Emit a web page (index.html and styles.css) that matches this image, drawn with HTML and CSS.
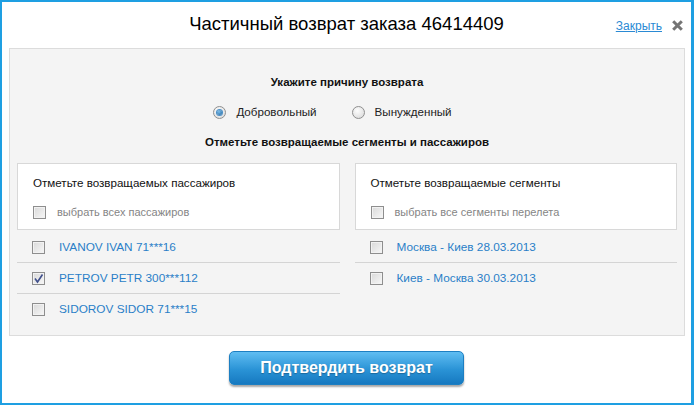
FILE: index.html
```html
<!DOCTYPE html>
<html>
  <head>
    <title>Частичный возврат заказа</title>
    <link rel="stylesheet" href="styles.css">
  </head>
  <body>
    <div class="modal">
      <div class="modal-head">
        <h1 class="modal-title">Частичный возврат заказа 46414409</h1>
        <div class="close">
          <a class="close-link" href="#">Закрыть</a>
          <svg class="close-x" width="11" height="11" viewBox="0 0 11 11">
            <path d="M1.2 1.2 L9.8 9.8 M9.8 1.2 L1.2 9.8" stroke="#747474" stroke-width="3" />
          </svg>
        </div>
      </div>

      <div class="panel">
        <h2 class="panel-title">Укажите причину возврата</h2>
        <div class="reasons">
          <label class="radio"><span class="radio-mark on"></span>Добровольный</label>
          <label class="radio"><span class="radio-mark"></span>Вынужденный</label>
        </div>
        <h2 class="panel-title">Отметьте возвращаемые сегменты и пассажиров</h2>

        <div class="columns">
          <div class="column">
            <div class="column-head">
              <div class="column-title">Отметьте возвращаемых пассажиров</div>
              <label class="check-all"><span class="check"></span>выбрать всех пассажиров</label>
            </div>
            <ul class="items">
              <li><span class="check"></span><a href="#">IVANOV IVAN 71***16</a></li>
              <li>
                <span class="check">
                  <svg width="11" height="11" viewBox="0 0 11 11">
                    <path d="M2 5.5 L4.5 9 L9.5 1.5" fill="none" stroke="#40508c" stroke-width="1.6" />
                  </svg>
                </span>
                <a href="#">PETROV PETR 300***112</a>
              </li>
              <li><span class="check"></span><a href="#">SIDOROV SIDOR 71***15</a></li>
            </ul>
          </div>

          <div class="column">
            <div class="column-head">
              <div class="column-title">Отметьте возвращаемые сегменты</div>
              <label class="check-all"><span class="check"></span>выбрать все сегменты перелета</label>
            </div>
            <ul class="items">
              <li><span class="check"></span><a href="#">Москва - Киев 28.03.2013</a></li>
              <li><span class="check"></span><a href="#">Киев - Москва 30.03.2013</a></li>
            </ul>
          </div>
        </div>
      </div>

      <div class="actions">
        <button class="confirm">Подтвердить возврат</button>
      </div>
    </div>
  </body>
</html>
```

FILE: styles.css
```css
body {
  margin: 0;
  padding: 0;
  font-family: "Liberation Sans", Arial, sans-serif;
  background-color: #fff;
}

.modal {
  width: 694px;
  height: 405px;
  box-sizing: border-box;
  border-style: solid;
  border-color: #1e9fe2;
  border-width: 2px 3px 2px 2px;
  background-color: #fff;
}

.modal-head {
  display: grid;
  grid-template-columns: 1fr auto 1fr;
  align-items: center;
  height: 46px;
  padding-bottom: 2px;
  box-sizing: border-box;
}

.modal-title {
  grid-column: 2;
  margin: 0;
  font-size: 18.5px;
  font-weight: normal;
  color: #000;
  line-height: 44px;
}

.close {
  grid-column: 3;
  justify-self: end;
  display: flex;
  align-items: center;
  gap: 10px;
  padding-right: 8px;
  padding-top: 3px;
}

.close-link {
  font-size: 12px;
  color: #2a8ad4;
  text-decoration: underline;
}

.close-x {
  display: block;
}

.panel {
  height: 288px;
  box-sizing: border-box;
  margin: 0 6px 0 7px;
  padding: 25px 7px 0;
  background-color: #f4f4f4;
  border: 1px solid #dcdcdc;
}

.panel-title {
  margin: 0;
  font-size: 11.5px;
  font-weight: bold;
  line-height: 16px;
  text-align: center;
  color: #111;
}

.reasons {
  display: flex;
  justify-content: center;
  gap: 35px;
  margin: 14px 0;
  padding-right: 29px;
}

.radio {
  display: flex;
  align-items: center;
  gap: 10px;
  font-size: 11.6px;
  line-height: 16px;
  color: #222;
}

.radio-mark {
  width: 11px;
  height: 11px;
  border: 1px solid #8f8f8f;
  border-radius: 50%;
  background: radial-gradient(circle at 40% 35%, #fdfdfd, #d6d6d6);
  display: flex;
  align-items: center;
  justify-content: center;
}

.radio-mark.on::after {
  content: "";
  width: 5px;
  height: 5px;
  border-radius: 50%;
  background: radial-gradient(circle at 40% 35%, #7cc0ee, #1c5f98);
  box-shadow: 0 0 0 1px #4a8fc7;
}

.columns {
  display: grid;
  grid-template-columns: 1fr 1fr;
  gap: 15px;
  margin-top: 13px;
}

.column-head {
  background-color: #fff;
  border: 1px solid #d8d8d8;
  padding: 11px 15px 9px;
}

.column-title {
  font-size: 11.6px;
  line-height: 16px;
  color: #111;
}

.check-all {
  display: flex;
  align-items: center;
  margin-top: 13px;
  font-size: 11px;
  line-height: 16px;
  color: #858585;
}

.check-all .check {
  margin-right: 11px;
}

.check {
  width: 11px;
  height: 11px;
  flex: none;
  border: 1px solid #8e8e8e;
  background: linear-gradient(135deg, #d9d9d9, #f7f7f7);
  box-shadow: inset 0 0 0 1px #f2f2f2;
  display: flex;
  align-items: center;
  justify-content: center;
}

.check svg {
  display: block;
}

.items {
  list-style: none;
  margin: 0;
  padding: 2px 0 0;
}

.items li {
  display: flex;
  align-items: center;
  height: 30px;
  padding-left: 15px;
  border-bottom: 1px solid #d4d4d4;
}

.items li:last-child {
  border-bottom: none;
}

.items li .check {
  margin-right: 14px;
}

.items a {
  font-size: 11.8px;
  color: #2a7fc8;
  text-decoration: none;
}

.actions {
  display: flex;
  justify-content: center;
  padding-top: 15px;
}

.confirm {
  width: 235px;
  height: 34px;
  border: 1px solid #1d7fc2;
  border-radius: 5px;
  background: linear-gradient(#5fbdf2, #2a93d6 55%, #1679c0);
  box-shadow: 0 2px 2px rgba(0, 0, 0, 0.35);
  color: #fff;
  font-family: "Liberation Sans", Arial, sans-serif;
  font-size: 16px;
  font-weight: bold;
  text-shadow: 0 1px 1px rgba(0, 0, 0, 0.25);
  cursor: pointer;
}
```
